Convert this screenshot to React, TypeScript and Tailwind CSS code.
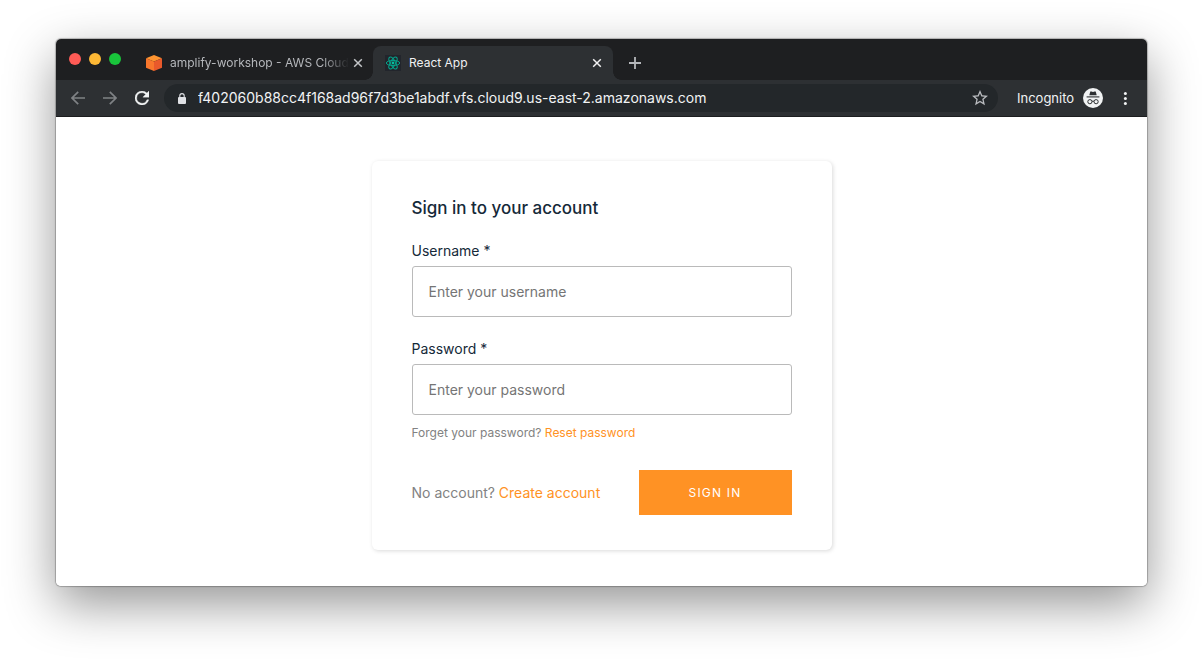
import React from "react";

function CloseIcon({ className }: { className: string }) {
  return (
    <svg viewBox="0 0 10 10" className={"size-[10px] " + className} fill="none" stroke="currentColor" strokeWidth="1.5">
      <path d="M1.2 1.2 8.8 8.8M8.8 1.2 1.2 8.8" />
    </svg>
  );
}

function CubeIcon() {
  return (
    <svg viewBox="0 0 16 16" className="size-4 shrink-0">
      <path d="M8 0 16 3.2 8 6.6 0 3.2Z" fill="#ff9430" />
      <path d="M0 3.2 8 6.6V16L0 12.8Z" fill="#f9772c" />
      <path d="M16 3.2 8 6.6V16l8-3.2Z" fill="#e9592b" />
    </svg>
  );
}

function ReactIcon() {
  return (
    <svg viewBox="0 0 16 16" className="size-4 shrink-0" fill="none" stroke="#05a58c" strokeWidth="1">
      <rect width="16" height="16" fill="#22252c" stroke="none" />
      <ellipse cx="8" cy="8" rx="6.7" ry="2.6" />
      <ellipse cx="8" cy="8" rx="6.7" ry="2.6" transform="rotate(60 8 8)" />
      <ellipse cx="8" cy="8" rx="6.7" ry="2.6" transform="rotate(120 8 8)" />
      <circle cx="8" cy="8" r="1.4" fill="#05c0a0" stroke="none" />
    </svg>
  );
}

function IncognitoIcon() {
  return (
    <svg viewBox="0 0 20 20" className="size-5" fill="none">
      <circle cx="10" cy="10" r="10" fill="#f1f3f4" />
      <path d="M6.3 7.2 7.3 3.5h1.2l1.5.5 1.5-.5h1.2l1 3.7Z" fill="#2d3033" />
      <path d="M3.6 8.9h12.8" stroke="#2d3033" strokeWidth="1.1" />
      <circle cx="6.9" cy="13.7" r="2.1" stroke="#2d3033" strokeWidth="1" />
      <circle cx="13.1" cy="13.7" r="2.1" stroke="#2d3033" strokeWidth="1" />
      <path d="M9 13.4q1-.7 2 0" stroke="#2d3033" strokeWidth="1" />
    </svg>
  );
}

function TabStrip() {
  return (
    <div className="flex h-[41px] items-end rounded-t-[5px] bg-[#1e1f21] pl-[13px] text-xs">
      <div className="flex items-center gap-2 pb-[15px]">
        <button aria-label="Close window" className="size-3 rounded-full bg-[#ff5b56]" />
        <button aria-label="Minimize window" className="size-3 rounded-full bg-[#fdb835]" />
        <button aria-label="Zoom window" className="size-3 rounded-full bg-[#19c43b]" />
      </div>
      <div className="ml-[25px] flex h-[34px] w-[227px] items-center text-[#b5b7bb]">
        <CubeIcon />
        <span className="ml-2 flex-1 overflow-hidden whitespace-nowrap [mask-image:linear-gradient(to_right,black_85%,transparent)]">
          amplify-workshop - AWS Cloud9
        </span>
        <button aria-label="Close amplify-workshop tab" className="ml-1 mr-[10px]">
          <CloseIcon className="text-[#c3c5c8]" />
        </button>
      </div>
      <div className="relative flex h-[34px] w-[240px] items-center rounded-t-lg bg-[#2d3033] pl-3 pr-[11px] text-[#f1f1f2]">
        <span className="absolute bottom-0 right-full size-2 bg-[radial-gradient(circle_at_top_left,transparent_7.5px,#2d3033_8px)]" />
        <span className="absolute bottom-0 left-full size-2 bg-[radial-gradient(circle_at_top_right,transparent_7.5px,#2d3033_8px)]" />
        <ReactIcon />
        <span className="ml-2 flex-1">React App</span>
        <button aria-label="Close React App tab">
          <CloseIcon className="text-[#f1f1f2]" />
        </button>
      </div>
      <button aria-label="New tab" className="ml-4 flex h-[34px] items-center text-[#b5b7bb]">
        <svg viewBox="0 0 12 12" className="size-3" stroke="currentColor" strokeWidth="1.8">
          <path d="M6 0v12M0 6h12" />
        </svg>
      </button>
    </div>
  );
}

function Toolbar() {
  return (
    <div className="flex h-[37px] items-center border-b border-[#1c1d1f] bg-[#2d3033] text-[#f1f3f4]">
      <div className="flex items-center gap-[18px] pl-[15px] text-[#7f8285]">
        <button aria-label="Back">
          <svg viewBox="0 0 14 14" className="size-[14px]" fill="none" stroke="currentColor" strokeWidth="1.7">
            <path d="M14 7H1.2M7.2.8 1 7l6.2 6.2" />
          </svg>
        </button>
        <button aria-label="Forward">
          <svg viewBox="0 0 14 14" className="size-[14px]" fill="none" stroke="currentColor" strokeWidth="1.7">
            <path d="M0 7h12.8M6.8.8 13 7l-6.2 6.2" />
          </svg>
        </button>
        <button aria-label="Reload" className="text-[#f1f3f4]">
          <svg viewBox="4 4 16 16" className="size-[14px]" fill="currentColor" stroke="currentColor" strokeWidth="0.4">
            <path d="M17.65 6.35A7.96 7.96 0 0 0 12 4a8 8 0 1 0 7.73 10h-2.08A6 6 0 1 1 12 6c1.66 0 3.14.69 4.22 1.78L13 11h7V4z" />
          </svg>
        </button>
      </div>
      <div className="ml-[15px] flex h-7 flex-1 items-center rounded-full bg-[#23272a] pl-[14px] pr-[10px]">
        <svg viewBox="0 0 8 11" className="h-[11px] w-2" fill="none">
          <rect y="4" width="8" height="7" rx="1" fill="#dfe1e5" />
          <path d="M1.8 4.5V2.8a2.2 2.2 0 0 1 4.4 0v1.7" stroke="#dfe1e5" strokeWidth="1.1" />
        </svg>
        <input
          aria-label="Address"
          defaultValue="f402060b88cc4f168ad96f7d3be1abdf.vfs.cloud9.us-east-2.amazonaws.com"
          className="ml-3 min-w-0 flex-1 bg-transparent text-sm outline-none"
        />
        <button aria-label="Bookmark this page">
          <svg viewBox="2 2 20 20" className="size-4" fill="#b9bbbf">
            <path d="m22 9.24-7.19-.62L12 2 9.19 8.63 2 9.24l5.46 4.73L5.82 21 12 17.27 18.18 21l-1.63-7.03zM12 15.4l-3.76 2.27 1-4.28-3.32-2.88 4.38-.38L12 6.1l1.71 4.04 4.38.38-3.32 2.88 1 4.28z" />
          </svg>
        </button>
      </div>
      <div className="ml-[19px] flex items-center gap-[9px] text-[13px] leading-5">
        <span className="w-[57px] whitespace-nowrap">Incognito</span>
        <IncognitoIcon />
      </div>
      <button aria-label="Menu" className="ml-5 mr-5">
        <svg viewBox="0 0 4 14" className="h-[14px] w-1" fill="currentColor">
          <circle cx="2.4" cy="2.4" r="1.5" />
          <circle cx="2.4" cy="7.4" r="1.5" />
          <circle cx="2.4" cy="12.4" r="1.5" />
        </svg>
      </button>
    </div>
  );
}

function Field({ id, label, type, placeholder }: { id: string; label: string; type: string; placeholder: string }) {
  return (
    <div>
      <label htmlFor={id} className="block text-sm leading-[18px] text-[#152939]">
        {label} *
      </label>
      <input
        id={id}
        type={type}
        placeholder={placeholder}
        className="mt-[6px] block h-[51px] w-full rounded-[3px] border border-[#bababa] bg-white px-4 text-sm text-[#152939] placeholder:text-[#757575]"
      />
    </div>
  );
}

function SignIn() {
  return (
    <form
      onSubmit={(e) => e.preventDefault()}
      className="mx-auto w-full max-w-[460px] rounded-md bg-white px-10 py-[35px] shadow-[1px_1px_4px_0_rgba(0,0,0,0.15)]"
    >
      <h1 className="mb-[22px] text-[17px] font-medium leading-6 text-[#152939]">Sign in to your account</h1>
      <div className="flex flex-col gap-[23px]">
        <Field id="username" label="Username" type="text" placeholder="Enter your username" />
        <Field id="password" label="Password" type="password" placeholder="Enter your password" />
      </div>
      <p className="mt-[10px] text-xs leading-4 text-[#828282]">
        Forget your password?{" "}
        <a href="#reset" className="text-[#ff9224]">
          Reset password
        </a>
      </p>
      <div className="mt-[29px] flex items-center justify-between">
        <p className="text-sm text-[#828282]">
          No account?{" "}
          <a href="#create" className="text-[#ff9224]">
            Create account
          </a>
        </p>
        <button type="submit" className="h-[45px] w-[153px] bg-[#ff9224] text-xs tracking-widest text-white">
          SIGN IN
        </button>
      </div>
    </form>
  );
}

export default function App() {
  return (
    <div className="min-h-screen overflow-hidden bg-white px-14 pb-[74px] pt-[39px] font-['Inter','Liberation_Sans',sans-serif]">
      <div className="rounded-[5px] shadow-[0_0_1px_1px_rgba(0,0,0,0.25),0_18px_50px_rgba(0,0,0,0.42)]">
        <TabStrip />
        <Toolbar />
        <main className="rounded-b-[5px] bg-white pb-9 pt-11">
          <SignIn />
        </main>
      </div>
    </div>
  );
}
